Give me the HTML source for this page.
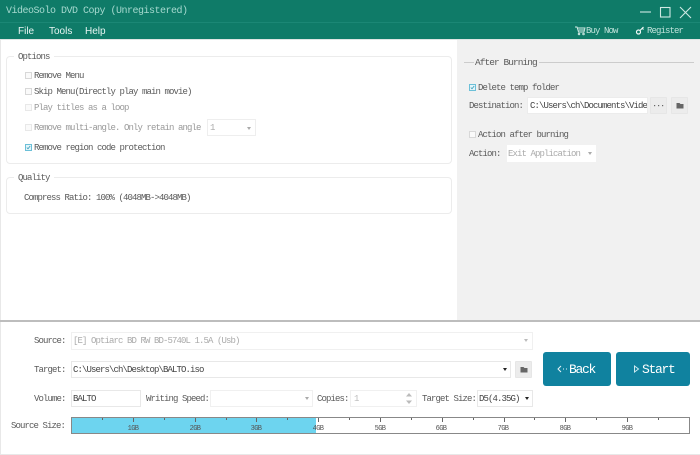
<!DOCTYPE html>
<html><head><meta charset="utf-8"><style>
html,body{margin:0;padding:0;background:#fff}
#r{position:relative;width:700px;height:455px;overflow:hidden;background:#fff;font:9px/10px "Liberation Mono",monospace;letter-spacing:-.9px;color:#5a5a5a;filter:blur(.25px)}
#r div,#r span.a,#r svg{position:absolute}
.t{white-space:nowrap;height:10px}
.box{box-sizing:border-box;border:1px solid #ececec;background:#fff}
.cb{width:7px;height:7px;box-sizing:border-box;border:1px solid #d8d8d8;background:#fafafa}
.ck{border-color:#6cc0d8;background:#e4f5fa}
.dis{color:#aaa}
.arrow{width:0;height:0;border-left:2.5px solid transparent;border-right:2.5px solid transparent;border-top:3px solid #aaa}
.btn{box-sizing:border-box;background:#ececec;border:1px solid #e6e6e6;border-radius:1px}
.go{background:#10829f;border-radius:3px;color:#fff;font-size:13px;line-height:35px;letter-spacing:-1.3px;white-space:nowrap}
.tk{background:#666;width:1px;top:418px}
.g{top:425px;font-size:7px;line-height:8px;letter-spacing:-.6px;width:24px;text-align:center;color:#555}
</style></head><body><div id="r">
<div style="left:0;top:0;width:700px;height:39px;background:#0f7b68"></div>
<div style="left:0;top:22px;width:700px;height:1px;background:#1b8775"></div>
<div style="left:0;top:39px;width:700px;height:1px;background:#dfe5e3"></div>
<div class="t" style="left:6px;top:6px;color:#a6d9cf;font-size:10px;line-height:11px;letter-spacing:-.5px">VideoSolo DVD Copy (Unregistered)</div>
<div class="t" style="left:18px;top:26px;color:#e8f5f2;font:10px/11px 'Liberation Sans',sans-serif;letter-spacing:0">File</div>
<div class="t" style="left:49px;top:26px;color:#e8f5f2;font:10px/11px 'Liberation Sans',sans-serif;letter-spacing:0">Tools</div>
<div class="t" style="left:85px;top:26px;color:#e8f5f2;font:10px/11px 'Liberation Sans',sans-serif;letter-spacing:0">Help</div>
<svg style="left:638px;top:5px" width="60" height="16" fill="none" stroke="#cfe9e3" stroke-width="1.1"><path d="M2 7H13"/><rect x="22.500" y="2.500" width="9.500" height="9.500"/><path d="M42 2L53 13M53 2L42 13"/></svg>
<svg style="left:574px;top:25px" width="12" height="11" fill="none" stroke="#d5ece7" stroke-width=".9"><path d="M1 2H3L4.500 7H10L11 3H3.500M4.500 5H10.500"/><circle cx="5" cy="9" r=".8"/><circle cx="9.500" cy="9" r=".8"/></svg>
<div class="t" style="left:586px;top:26px;color:#bfe2da">Buy Now</div>
<svg style="left:635px;top:25px" width="10" height="11" fill="none" stroke="#f0f8f6" stroke-width="1.2"><circle cx="3.500" cy="7" r="2"/><path d="M5 5.500L8.500 2M7 3L8.500 4.500"/></svg>
<div class="t" style="left:647px;top:26px;color:#bfe2da">Register</div>

<div style="left:457px;top:40px;width:243px;height:281px;background:#f1f1f1"></div>
<div style="left:0;top:40px;width:1px;height:281px;background:#e8e8e8"></div>

<div class="box" style="left:6px;top:56px;width:446px;height:108px;border-radius:4px"></div>
<div class="t" style="left:14px;top:52px;background:#fff;padding:0 4px">Options</div>
<div class="cb" style="left:25px;top:72px"></div><div class="t" style="left:34px;top:71px">Remove Menu</div>
<div class="cb" style="left:25px;top:88px"></div><div class="t" style="left:34px;top:87px">Skip Menu(Directly play main movie)</div>
<div class="cb" style="left:25px;top:104px;border-color:#e8e8e8"></div><div class="t dis" style="left:34px;top:103px;color:#999">Play titles as a loop</div>
<div class="cb" style="left:25px;top:124px;border-color:#e8e8e8"></div><div class="t dis" style="left:34px;top:123px;color:#999">Remove multi-angle. Only retain angle</div>
<div class="box" style="left:207px;top:119px;width:49px;height:17px;border-color:#eee"></div><div class="t dis" style="left:210px;top:123px">1</div><div class="arrow" style="left:247px;top:127px"></div>
<div class="cb ck" style="left:25px;top:144px"></div><div class="t" style="left:34px;top:143px">Remove region code protection</div>
<svg style="left:26px;top:145px" width="5" height="5" fill="none" stroke="#3b9fbb" stroke-width=".8"><path d="M.8 2.500L2 3.800L4.200 1"/></svg>

<div class="box" style="left:6px;top:177px;width:446px;height:37px;border-radius:4px"></div>
<div class="t" style="left:14px;top:173px;background:#fff;padding:0 4px 0">Quality</div>
<div class="t" style="left:24px;top:193px">Compress Ratio: 100% (4048MB-&gt;4048MB)</div>

<div style="left:464px;top:62px;width:10px;height:1px;background:#ccc"></div>
<div style="left:539px;top:62px;width:155px;height:1px;background:#ccc"></div>
<div class="t" style="left:475px;top:58px;font-size:9.500px;letter-spacing:-.95px">After Burning</div>
<div class="cb ck" style="left:469px;top:84px"></div><div class="t" style="left:478px;top:83px">Delete temp folder</div>
<svg style="left:470px;top:85px" width="5" height="5" fill="none" stroke="#3b9fbb" stroke-width=".8"><path d="M.8 2.500L2 3.800L4.200 1"/></svg>
<div class="t" style="left:469px;top:101px">Destination:</div>
<div class="box" style="left:527px;top:97px;width:121px;height:17px;overflow:hidden"><div class="t" style="left:2px;top:3px;width:117px;overflow:hidden;color:#444">C:\Users\ch\Documents\Video</div></div>
<div class="btn" style="left:650px;top:97px;width:17px;height:17px"></div>
<svg style="left:654px;top:104px" width="10" height="3" fill="#666"><rect x="0" y="1" width="1.200" height="1.200"/><rect x="4" y="1" width="1.200" height="1.200"/><rect x="8" y="1" width="1.200" height="1.200"/></svg>
<div class="btn" style="left:671px;top:97px;width:17px;height:17px"></div>
<svg style="left:676px;top:102px" width="8" height="7"><path d="M.5 1H3.500L4.500 2H7.500V6.500H.5Z" fill="#666"/></svg>
<div class="cb" style="left:469px;top:131px"></div><div class="t" style="left:478px;top:130px">Action after burning</div>
<div class="t" style="left:469px;top:149px">Action:</div>
<div style="left:507px;top:145px;width:89px;height:17px;background:#fff"></div><div class="t dis" style="left:508px;top:149px">Exit Application</div><div class="arrow" style="left:588px;top:152px"></div>

<div style="left:0;top:320px;width:700px;height:2px;background:#bdbdbd"></div>
<div style="left:0;top:322px;width:1px;height:133px;background:#e8e8e8"></div>
<div style="left:0;top:454px;width:700px;height:1px;background:#e8e8e8"></div>

<div class="t" style="left:34px;top:336px">Source:</div>
<div class="box" style="left:71px;top:332px;width:462px;height:18px;border-color:#f0f0f0"></div><div class="t dis" style="left:73px;top:336px">[E] Optiarc BD RW BD-5740L 1.5A (Usb)</div><div class="arrow" style="left:524px;top:339px;border-top-color:#bbb"></div>

<div class="t" style="left:34px;top:365px">Target:</div>
<div class="box" style="left:71px;top:361px;width:440px;height:17px;border-color:#e8e8e8"></div><div class="t" style="left:73px;top:365px;color:#444">C:\Users\ch\Desktop\BALTO.iso</div><div class="arrow" style="left:503px;top:368px;border-top-color:#222"></div>
<div class="btn" style="left:515px;top:361px;width:17px;height:17px"></div>
<svg style="left:520px;top:366px" width="8" height="7"><path d="M.5 1H3.500L4.500 2H7.500V6.500H.5Z" fill="#666"/></svg>

<div class="t" style="left:34px;top:394px">Volume:</div>
<div class="box" style="left:71px;top:390px;width:70px;height:17px;border-color:#e8e8e8"></div><div class="t" style="left:73px;top:394px;color:#444">BALTO</div>
<div class="t" style="left:146px;top:394px">Writing Speed:</div>
<div class="box" style="left:210px;top:390px;width:103px;height:17px;border-color:#f0f0f0"></div><div class="arrow" style="left:305px;top:397px"></div>
<div class="t" style="left:317px;top:394px">Copies:</div>
<div class="box" style="left:350px;top:390px;width:67px;height:17px;border-color:#f0f0f0"></div><div class="t dis" style="left:354px;top:394px;color:#bbb">1</div>
<svg style="left:405px;top:392px" width="8" height="13" fill="#bbb"><path d="M4 1L7 4.500H1ZM4 12L1 8.500H7Z"/></svg>
<div class="t" style="left:422px;top:394px">Target Size:</div>
<div class="box" style="left:477px;top:390px;width:56px;height:17px;border-color:#e8e8e8"></div><div class="t" style="left:479px;top:394px;color:#444">D5(4.35G)</div><div class="arrow" style="left:525px;top:397px;border-top-color:#222"></div>

<div class="t" style="left:11px;top:421px">Source Size:</div>
<div style="left:71px;top:417px;width:619px;height:17px;box-sizing:border-box;border:1px solid #888;background:#fff"></div>
<div style="left:72px;top:418px;width:244px;height:15px;background:#6dd4ef"></div>
<div id="ticks"><div class="tk" style="left:102px;height:2px"></div><div class="tk" style="left:133px;height:4px"></div><div class="tk" style="left:164px;height:2px"></div><div class="tk" style="left:195px;height:4px"></div><div class="tk" style="left:226px;height:2px"></div><div class="tk" style="left:256px;height:4px"></div><div class="tk" style="left:287px;height:2px"></div><div class="tk" style="left:318px;height:4px"></div><div class="tk" style="left:349px;height:2px"></div><div class="tk" style="left:380px;height:4px"></div><div class="tk" style="left:411px;height:2px"></div><div class="tk" style="left:442px;height:4px"></div><div class="tk" style="left:473px;height:2px"></div><div class="tk" style="left:504px;height:4px"></div><div class="tk" style="left:534px;height:2px"></div><div class="tk" style="left:565px;height:4px"></div><div class="tk" style="left:596px;height:2px"></div><div class="tk" style="left:627px;height:4px"></div><div class="tk" style="left:658px;height:2px"></div></div>
<div class="g" style="left:121px">1GB</div><div class="g" style="left:183px">2GB</div><div class="g" style="left:244px">3GB</div><div class="g" style="left:306px">4GB</div><div class="g" style="left:368px">5GB</div><div class="g" style="left:429px">6GB</div><div class="g" style="left:491px">7GB</div><div class="g" style="left:553px">8GB</div><div class="g" style="left:615px">9GB</div>

<div class="go" style="left:543px;top:352px;width:68px;height:34px"><svg style="left:14px;top:13px" width="11" height="8" fill="none" stroke="#e6f4f8" stroke-width="1"><path d="M4 1L1 4L4 7"/><path d="M6 4H7M9 4H10"/></svg><span style="position:absolute;left:26px">Back</span></div>
<div class="go" style="left:616px;top:352px;width:74px;height:34px"><svg style="left:17px;top:13px" width="7" height="8" fill="none" stroke="#cfeaf1"><path d="M1.500 1V7L5.500 4Z"/></svg><span style="position:absolute;left:26px">Start</span></div>
</div></body></html>
